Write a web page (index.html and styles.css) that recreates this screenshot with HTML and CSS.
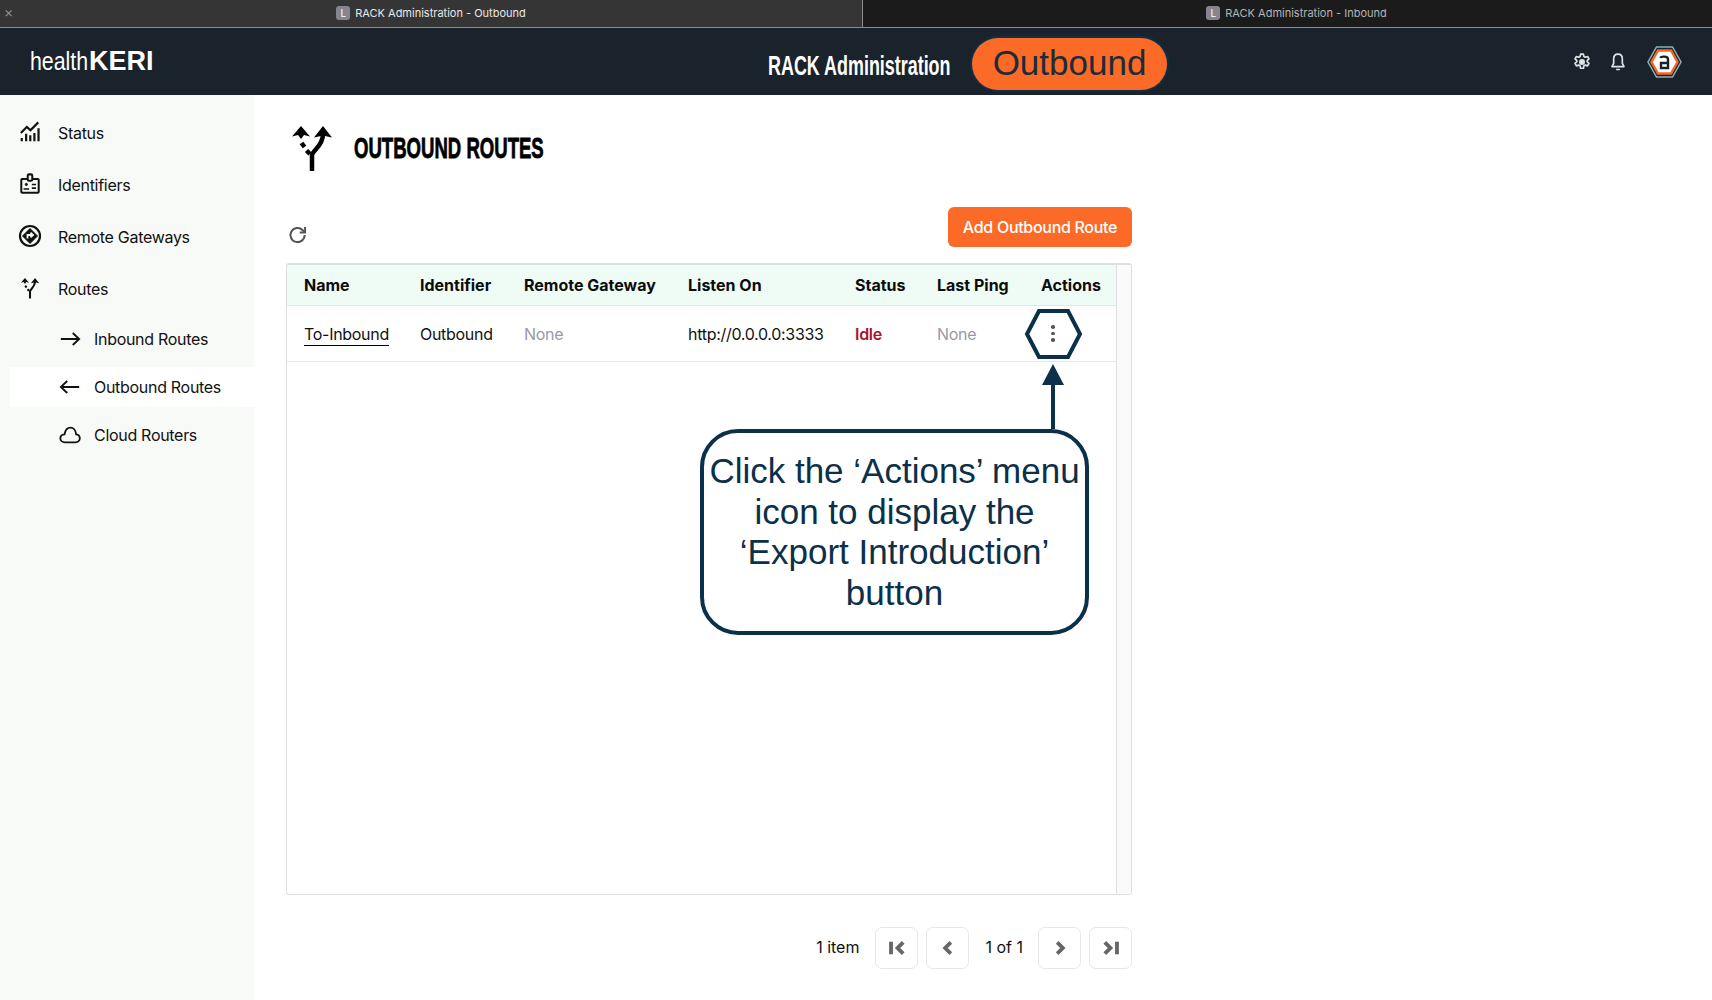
FILE: index.html
```html
<!DOCTYPE html>
<html lang="en">
<head>
  <meta charset="UTF-8">
  <title>RACK Administration - Outbound</title>
  <link rel="stylesheet" href="styles.css">
</head>
<body>

  <div class="tabs">
    <div class="tab tab-active">
      <span class="tab-close">×</span>
      <span class="tab-icon">L</span>
      <span>RACK Administration - Outbound</span>
    </div>
    <div class="tab tab-other">
      <span class="tab-icon">L</span>
      <span>RACK Administration - Inbound</span>
    </div>
  </div>

  <header class="topbar">
    <div class="logo"><span class="logo-health">health</span><span class="logo-keri">KERI</span></div>
    <div class="topbar-title">
      <span class="app-name"><span>RACK Administration</span></span>
      <span class="app-pill">Outbound</span>
    </div>
    <div class="topbar-icons">
      <svg class="top-icon" viewBox="0 0 24 24" fill="none" stroke="#dfe3e6" stroke-width="2" stroke-linejoin="round">
        <path d="M10.3 2.5h3.4l.6 2.9 1.6.9 2.8-.9 1.7 2.9-2.2 2v1.4l2.2 2-1.7 2.9-2.8-.9-1.6.9-.6 2.9h-3.4l-.6-2.9-1.6-.9-2.8.9-1.7-2.9 2.2-2v-1.4l-2.2-2 1.7-2.9 2.8.9 1.6-.9z"/>
        <circle cx="12" cy="12" r="2.6" fill="#dfe3e6"/>
      </svg>
      <svg class="top-icon" viewBox="0 0 24 24" fill="none" stroke="#dfe3e6" stroke-width="2" stroke-linejoin="round">
        <path d="M12 2.500c-3.400 0-5.200 2.600-5.200 5.600v5.600L4.800 17.500h14.400l-2-3.800V8.100c0-3-1.800-5.600-5.200-5.600z"/>
        <path d="M10.500 21h3" stroke-linecap="round"/>
      </svg>
      <svg class="avatar" viewBox="0 0 35 32">
        <polygon points="9.500,1 25.500,1 34,16 25.500,31 9.500,31 1,16" fill="#1a232b" stroke="#8fb0ad" stroke-width="1.500"/>
        <polygon points="11,4.500 24,4.500 30.500,16 24,27.500 11,27.500 4.500,16" fill="#fff" stroke="#f0682c" stroke-width="2.500"/>
        <path d="M13.500 12c.5-2 7.500-2 7.500 1v9h-7v-5h7" fill="none" stroke="#1a232b" stroke-width="2.400"/>
      </svg>
    </div>
  </header>

  <div class="layout">
    <nav class="sidebar">
      <a class="nav-item">
        <svg class="nav-icon" viewBox="0 0 24 24" fill="none" stroke="#111" stroke-width="2.400">
          <path d="M2 13 8.500 6.500l4 3.500 8.500-8.500"/>
          <path d="M3 22v-3.500M7.800 22v-8M12.300 22v-6.500M16.800 22v-9M21.300 22V8"/>
        </svg>
        Status
      </a>
      <a class="nav-item">
        <svg class="nav-icon" viewBox="0 0 24 24" fill="none" stroke="#111" stroke-width="2.200">
          <rect x="2.500" y="6.500" width="19" height="15" rx="1"/>
          <rect x="9.500" y="1.500" width="5" height="7" rx="1.500" fill="#f8faf8"/>
          <circle cx="8" cy="12.500" r="1.200" fill="#111" stroke-width="1"/>
          <path d="M5 17.500h6M14 12.500h4.500M14 16.500h4.500" stroke-width="1.800"/>
        </svg>
        Identifiers
      </a>
      <a class="nav-item">
        <svg class="nav-icon nav-icon-big" viewBox="0 0 24 24" fill="none" stroke="#111">
          <circle cx="12" cy="12" r="10" stroke-width="2.200"/>
          <path d="M12 4.500 19.500 12 12 19.500 4.500 12z" fill="#111" stroke-width="1"/>
          <path d="M9.500 14.500V11h4.500M12.500 8.800 15 11l-2.500 2.200" stroke="#f8faf8" stroke-width="1.800"/>
        </svg>
        Remote Gateways
      </a>
      <a class="nav-item">
        <svg class="nav-icon" viewBox="4 4 46 48" fill="none" stroke="#111" stroke-width="4.500">
          <path d="M27 51V35C28 30 38 26 38 14"/>
          <path d="M25 34 21.500 30.500M19.500 27 16.500 23"/>
          <path d="M38 6 47 17.500 40 16 38 18 36 16 29 17.500z" fill="#111" stroke="none"/>
          <path d="M16 6 25 16.500 19 15 16 19 13 15 7 16.500z" fill="#111" stroke="none"/>
        </svg>
        Routes
      </a>
      <a class="nav-item nav-sub">
        <svg class="sub-icon" viewBox="0 0 24 24" fill="none" stroke="#111" stroke-width="2">
          <path d="M2 12h20M15 5.500l7 6.500-7 6.500"/>
        </svg>
        Inbound Routes
      </a>
      <a class="nav-item nav-sub nav-active">
        <svg class="sub-icon" viewBox="0 0 24 24" fill="none" stroke="#111" stroke-width="2">
          <path d="M22 12H2M9 5.500 2 12l7 6.500"/>
        </svg>
        Outbound Routes
      </a>
      <a class="nav-item nav-sub">
        <svg class="sub-icon" viewBox="0 0 24 24" fill="none" stroke="#111" stroke-width="2">
          <path d="M6.500 20C3.500 20 1.500 18 1.500 15.500S3.500 11.500 6 11.300C6.800 7 9.500 4 12.500 4c3.400 0 5.800 3.300 6.200 7.300 2.400.3 4 2 4 4.300 0 2.500-2 4.400-4.700 4.400z"/>
        </svg>
        Cloud Routers
      </a>
    </nav>

    <main class="content">
      <div class="page-title">
        <svg class="title-icon" viewBox="0 0 60 60" fill="none" stroke="#000" stroke-width="4.500">
          <path d="M27 51V35C28 30 38 26 38 14"/>
          <path d="M25 34 21.500 30.500M19.500 27 16.500 23"/>
          <path d="M38 6 47 17.500 40 16 38 18 36 16 29 17.500z" fill="#000" stroke="none"/>
          <path d="M16 6 25 16.500 19 15 16 19 13 15 7 16.500z" fill="#000" stroke="none"/>
        </svg>
        <h1><span>OUTBOUND ROUTES</span></h1>
      </div>

      <div class="toolbar">
        <svg class="refresh" viewBox="0 0 24 24" fill="none" stroke="#555" stroke-width="2.400">
          <path d="M20 12a8.500 8.500 0 1 1-2.600-6.100L20 8.500"/>
          <path d="M20.500 2.500v6.500H14" stroke-linejoin="miter"/>
        </svg>
        <button class="btn-add">Add Outbound Route</button>
      </div>

      <div class="table-box">
        <div class="table-scroll">
          <table>
            <thead>
              <tr>
                <th class="col-name">Name</th>
                <th class="col-id">Identifier</th>
                <th class="col-gw">Remote Gateway</th>
                <th class="col-listen">Listen On</th>
                <th class="col-status">Status</th>
                <th class="col-ping">Last Ping</th>
                <th>Actions</th>
              </tr>
            </thead>
            <tbody>
              <tr>
                <td><a class="route-link">To-Inbound</a></td>
                <td>Outbound</td>
                <td class="muted">None</td>
                <td>http://0.0.0.0:3333</td>
                <td class="idle">Idle</td>
                <td class="muted">None</td>
                <td class="actions-cell"><span class="dots"><i></i><i></i><i></i></span></td>
              </tr>
            </tbody>
          </table>
        </div>
        <div class="scroll-gutter"></div>
      </div>

      <div class="pager">
        <span class="pager-text">1 item</span>
        <button class="pager-btn">
          <svg viewBox="0 0 16 16" fill="none" stroke="#666" stroke-width="3.400"><path d="M2.700 2.500v11M13.500 3 8.500 8l5 5"/></svg>
        </button>
        <button class="pager-btn">
          <svg viewBox="0 0 16 16" fill="none" stroke="#666" stroke-width="3.400"><path d="M10.500 3 5.500 8l5 5"/></svg>
        </button>
        <span class="pager-text pager-of">1 of 1</span>
        <button class="pager-btn">
          <svg viewBox="0 0 16 16" fill="none" stroke="#666" stroke-width="3.400"><path d="M5.500 3l5 5-5 5"/></svg>
        </button>
        <button class="pager-btn">
          <svg viewBox="0 0 16 16" fill="none" stroke="#666" stroke-width="3.400"><path d="M2.500 3l5 5-5 5M13.300 2.500v11"/></svg>
        </button>
      </div>
    </main>
  </div>

  <!-- annotation drawn over the screenshot -->
  <svg class="callout-marks" viewBox="0 0 80 100" fill="none" stroke="#0b3049">
    <polygon points="16,5 45,5 57,28 45,51 16,51 4,28" stroke-width="4"/>
  </svg>
  <div class="callout-arrow"></div>
  <div class="callout">Click the ‘Actions’ menu icon to display the ‘Export Introduction’ button</div>

</body>
</html>
```

FILE: styles.css
```css
* {
  box-sizing: border-box;
}
html, body {
  margin: 0;
  height: 1000px;
  overflow: hidden;
}
body {
  font-family: Inter, "Liberation Sans", sans-serif;
  font-size: 16px;
  color: #111;
  background: #fff;
  display: flex;
  flex-direction: column;
}

/* browser tabs */
.tabs {
  height: 28px;
  display: grid;
  grid-template-columns: 863px 1fr;
  background: #1b1b1b;
  border-bottom: 1px solid #8b8d8e;
  font-size: 11px;
  color: #d8d8d8;
}
.tab {
  position: relative;
  display: flex;
  align-items: center;
  justify-content: center;
  gap: 5px;
  padding-bottom: 2px;
}
.tab-active {
  background: #353535;
  border-right: 1px solid #8b8d8e;
  color: #e8e8e8;
}
.tab-other {
  color: #b4b4b4;
  padding-left: 18px;
}
.tab-close {
  position: absolute;
  left: 4px;
  top: 4px;
  color: #8e8e8e;
  font-size: 14px;
  line-height: 16px;
}
.tab-icon {
  width: 14px;
  height: 14px;
  border-radius: 3px;
  background: #85858f;
  color: #fff;
  font-size: 10px;
  line-height: 15px;
  text-align: center;
}

/* top bar */
.topbar {
  height: 67px;
  background: #1a232b;
  display: flex;
  align-items: center;
  position: relative;
  color: #fff;
}
.logo {
  width: 700px;
  padding-left: 30px;
  display: flex;
  align-items: center;
  white-space: nowrap;
}
.logo-health {
  font-family: "Liberation Sans", sans-serif;
  font-size: 26px;
  display: inline-block;
  transform: scaleX(0.82);
  transform-origin: left center;
  width: 59px;
}
.logo-keri {
  font-family: "Liberation Sans", sans-serif;
  font-weight: bold;
  font-size: 27px;
  display: inline-block;
}
.topbar-title {
  position: absolute;
  left: 768px;
  top: 10px;
  display: flex;
  align-items: center;
  gap: 23px;
}
.app-name {
  width: 181px;
  font-family: "Liberation Sans", sans-serif;
  font-weight: bold;
  font-size: 28px;
  padding-top: 3px;
  white-space: nowrap;
}
.app-name span {
  display: inline-block;
  transform: scaleX(0.64);
  transform-origin: left center;
}
.app-pill {
  height: 52px;
  width: 195px;
  border-radius: 26px;
  background: #fb6a26;
  box-shadow: 0 0 0 2px #0d2f47;
  color: #1e2b38;
  font-family: "Liberation Sans", sans-serif;
  font-size: 35px;
  line-height: 50px;
  text-align: center;
}
.topbar-icons {
  margin-left: auto;
  padding-right: 30px;
  display: flex;
  align-items: center;
  gap: 16px;
}
.top-icon {
  width: 20px;
  height: 20px;
}
.avatar {
  width: 35px;
  height: 32px;
  margin-left: 3px;
}

/* page */
.layout {
  flex: 1;
  display: flex;
  min-height: 0;
}
.sidebar {
  width: 254px;
  background: #f8faf8;
  padding: 12px 0 0 10px;
  display: flex;
  flex-direction: column;
}
.nav-item {
  height: 52px;
  display: flex;
  align-items: center;
  gap: 17px;
  padding-left: 9px;
  letter-spacing: -0.3px;
}
.nav-icon {
  width: 22px;
  height: 22px;
  flex: none;
  margin-top: -3px;
}
.nav-icon-big {
  width: 24px;
  height: 24px;
  margin-left: -1px;
  margin-right: -1px;
}
.nav-sub {
  height: 48px;
  padding-left: 49px;
  gap: 13px;
}
.nav-active {
  background: #fff;
  height: 40px;
  margin: 4px 0;
}
.sub-icon {
  width: 22px;
  height: 22px;
  flex: none;
}

.content {
  width: 878px;
  padding: 0 0 0 32px;
}
.page-title {
  display: flex;
  align-items: center;
  height: 94px;
  padding-top: 5px;
  margin-bottom: 18px;
}
.title-icon {
  width: 60px;
  height: 60px;
  margin: 11px 9px 0 -1px;
}
.page-title h1 {
  margin: 0;
  padding-top: 7px;
  width: 190px;
  font-family: "Liberation Sans", sans-serif;
  font-size: 29px;
  font-weight: bold;
  color: #000;
  white-space: nowrap;
  -webkit-text-stroke: 0.8px #000;
}
.page-title h1 span {
  display: inline-block;
  transform: scaleX(0.64);
  transform-origin: left center;
}
.toolbar {
  height: 40px;
  display: flex;
  justify-content: space-between;
  align-items: flex-end;
}
.refresh {
  width: 20px;
  height: 20px;
  margin-left: 2px;
  margin-bottom: 2px;
}
.btn-add {
  width: 184px;
  height: 40px;
  border: 0;
  border-radius: 6px;
  background: #fb6a26;
  color: #fff;
  font-family: inherit;
  font-size: 16px;
  font-weight: 500;
  letter-spacing: -0.3px;
}
.table-box {
  margin-top: 16px;
  height: 632px;
  border: 1px solid #dcdfe3;
  border-top-width: 2px;
  border-radius: 3px;
  display: flex;
}
.table-scroll {
  flex: 1;
}
.scroll-gutter {
  width: 15px;
  background: #fafafa;
  border-left: 1px solid #dcdfe3;
}
table {
  width: 100%;
  border-collapse: collapse;
}
th, td {
  text-align: left;
  padding: 0;
  font-size: 16px;
  border-bottom: 1px solid #e5e7eb;
}
th {
  height: 40px;
  background: #effcf6;
  font-weight: 700;
  color: #0c0c0c;
}
td {
  height: 56px;
  padding-top: 2px;
  letter-spacing: -0.3px;
}
.col-name {
  width: 133px;
  padding-left: 17px;
}
td:first-child {
  padding-left: 17px;
}
.col-id {
  width: 104px;
}
.col-gw {
  width: 164px;
}
.col-listen {
  width: 167px;
}
.col-status {
  width: 82px;
}
.col-ping {
  width: 104px;
}
.route-link {
  border-bottom: 1px solid #000;
  padding-bottom: 1px;
}
.muted {
  color: #9a9aa3;
}
.idle {
  color: #a9122d;
  font-weight: 600;
}
.actions-cell {
  padding-left: 10px;
}
.dots {
  display: inline-flex;
  flex-direction: column;
  gap: 3px;
  vertical-align: middle;
  margin-bottom: 3px;
}
.dots i {
  width: 3.5px;
  height: 3.5px;
  border-radius: 50%;
  background: #555;
}
.pager {
  margin-top: 32px;
  display: flex;
  align-items: center;
  justify-content: flex-end;
  gap: 8px;
}
.pager-text {
  margin-right: 8px;
  padding-bottom: 2px;
}
.pager-of {
  margin: 0 7px 0 8px;
}
.pager-btn {
  width: 43px;
  height: 42px;
  border: 1px solid #e5e7eb;
  border-radius: 7px;
  background: #fff;
  padding: 0;
  display: flex;
  align-items: center;
  justify-content: center;
}
.pager-btn svg {
  width: 18px;
  height: 18px;
}

/* annotation */
.callout {
  position: absolute;
  left: 700px;
  top: 429px;
  width: 389px;
  height: 206px;
  padding-top: 18px;
  background: #fff;
  border: 4px solid #0b3049;
  border-radius: 38px;
  color: #0b3049;
  font-family: "Liberation Sans", sans-serif;
  font-size: 35px;
  line-height: 40.5px;
  text-align: center;
}
.callout-marks {
  position: absolute;
  left: 1023px;
  top: 306px;
  width: 80px;
  height: 100px;
}
.callout-arrow {
  position: absolute;
  left: 1051px;
  top: 385px;
  width: 4px;
  height: 44px;
  background: #0b3049;
}
.callout-arrow::before {
  content: "";
  position: absolute;
  left: -9px;
  top: -21px;
  border-left: 11px solid transparent;
  border-right: 11px solid transparent;
  border-bottom: 21px solid #0b3049;
}
```
